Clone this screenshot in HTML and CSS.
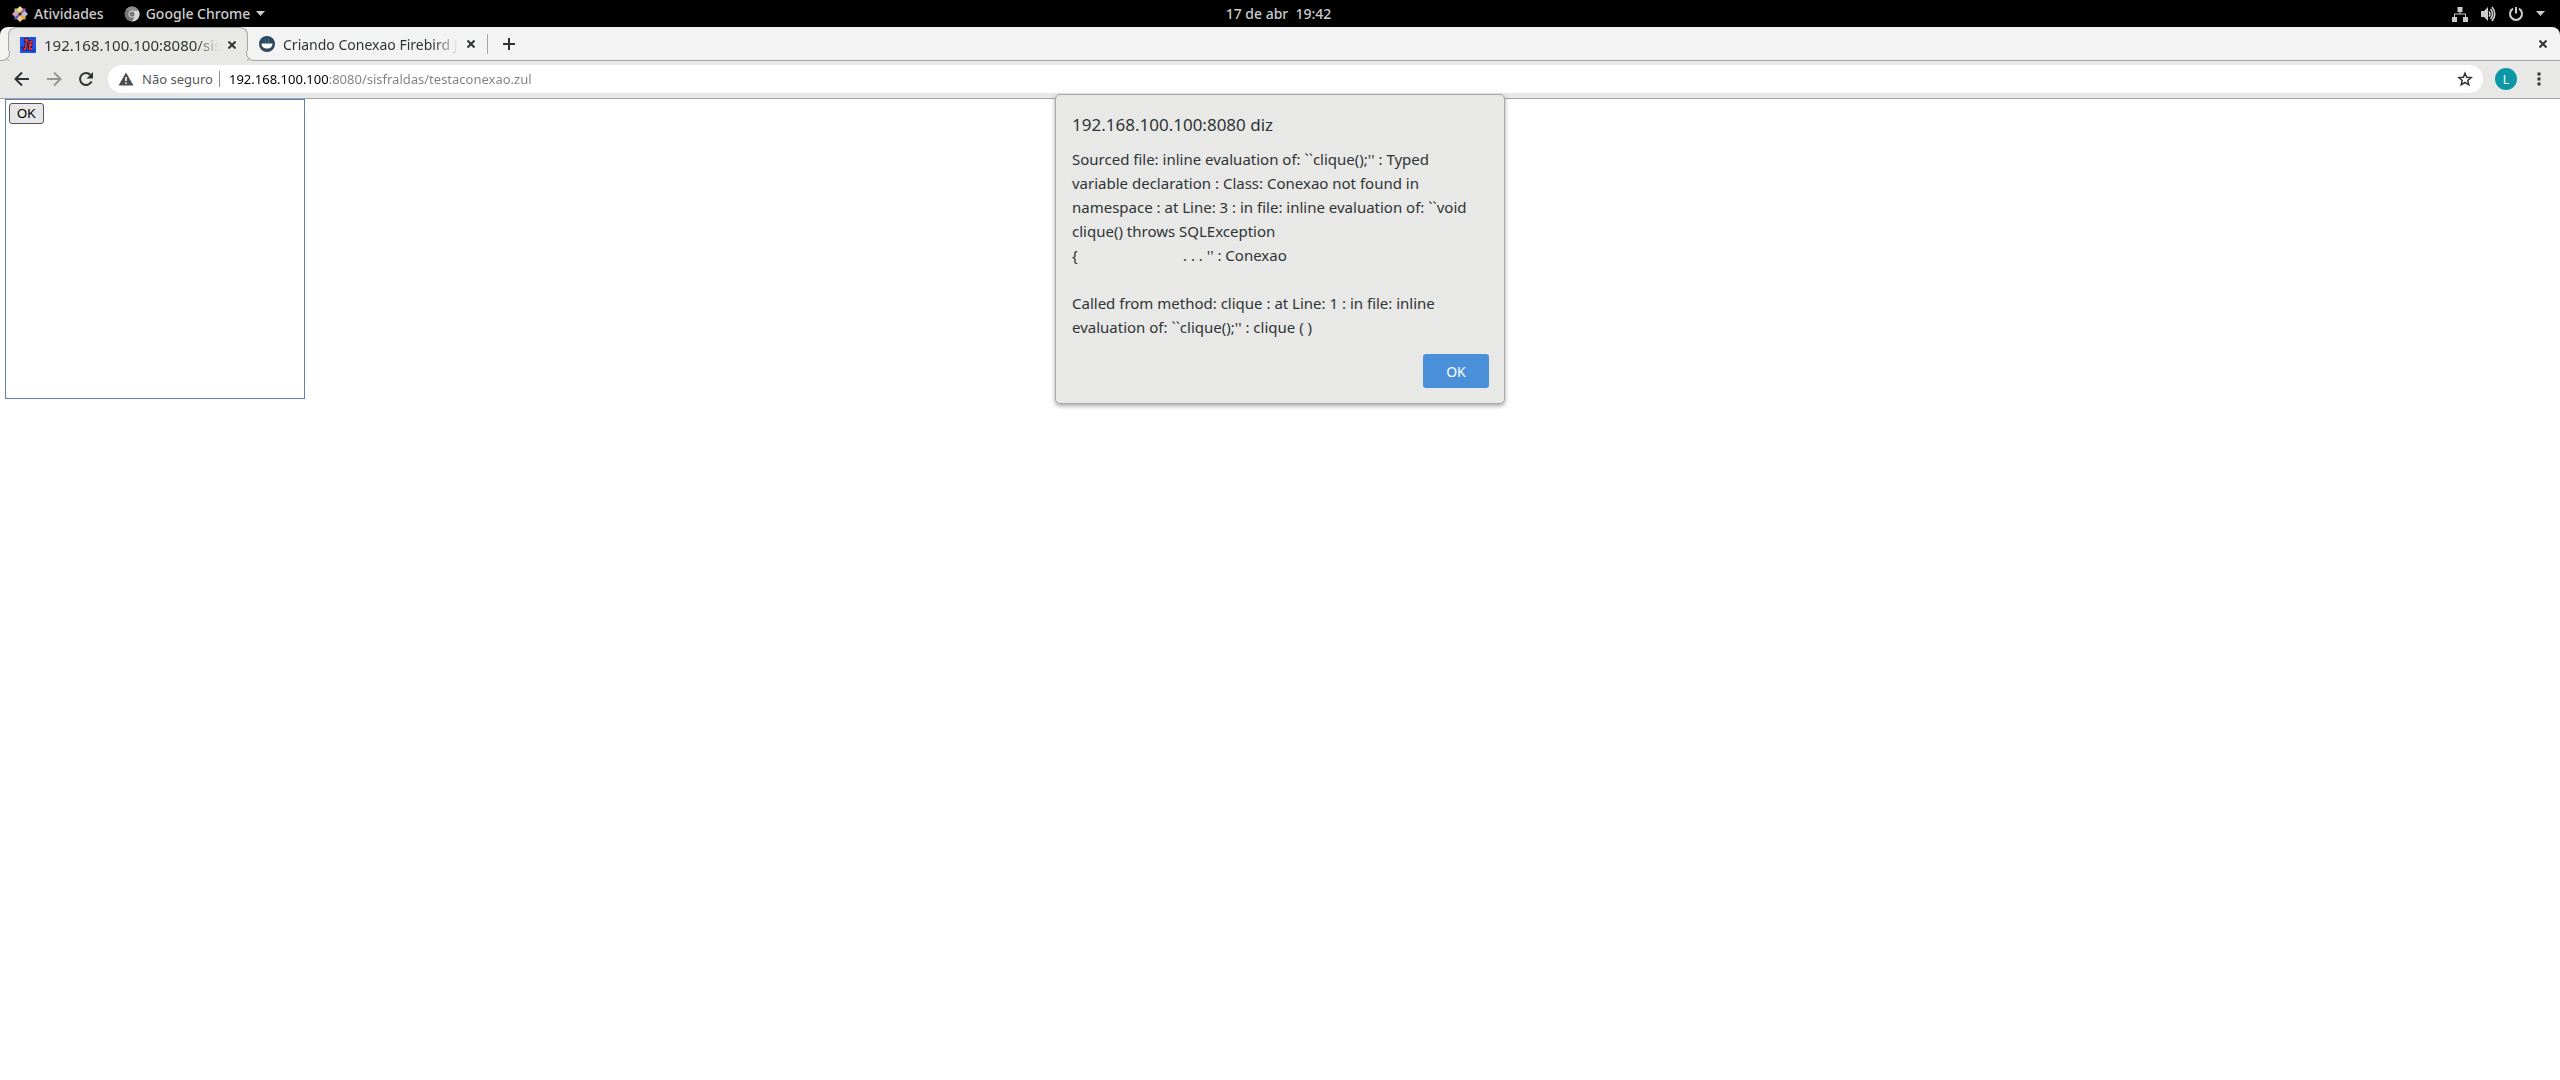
FILE: index.html
```
<!DOCTYPE html>
<html lang="pt-BR">

<head>
    <meta charset="utf-8">
    <meta name="viewport" content="width=device-width, initial-scale=1.0">
    <title>testaconexao</title>
    <link rel="stylesheet" href="styles.css">
</head>

<body>

    <header class="topbar">
        <div class="topbar_left">
            <button class="topbar_btn">
                <svg width="16" height="16" viewBox="0 0 16 16">
                    <path fill="#b5d07a" d="M2.500 2.500h5v5h-5z"/>
                    <path fill="#a85f9c" d="M8.500 2.500h5v5h-5z"/>
                    <path fill="#eda83c" d="M8.500 8.500h5v5h-5z"/>
                    <path fill="#5a5cb0" d="M2.500 8.500h5v5h-5z"/>
                    <path fill="#f0dc8c" d="M8 0l3 3-3 4-3-4z"/>
                    <path fill="#d99ac8" d="M0 8l3-3 4 3-4 3z"/>
                    <path fill="#b9b8e0" d="M16 8l-3 3-4-3 4-3z"/>
                    <path fill="#f3c98e" d="M8 16l-3-3 3-4 3 4z"/>
                </svg>
                Atividades
            </button>
            <button class="topbar_btn">
                <svg width="16" height="16" viewBox="0 0 16 16">
                    <circle cx="8" cy="8" r="7.5" fill="#777"/>
                    <path fill="#d8d8d8" d="M8 4.500h6.700A7.500 7.500 0 0 1 8 15.500l3.200-6z"/>
                    <path fill="#8c8c8c" d="M1.700 4A7.500 7.500 0 0 1 14.700 4.500H8z"/>
                    <circle cx="8" cy="8" r="3.5" fill="#ddd"/>
                    <circle cx="8" cy="8" r="2.6" fill="#777"/>
                </svg>
                Google Chrome
                <svg width="9" height="5" viewBox="0 0 9 5"><path fill="#ccc" d="M0 0h9L4.500 5z"/></svg>
            </button>
        </div>
        <button class="topbar_btn">17 de abr&nbsp; 19:42</button>
        <button class="topbar_btn topbar_right" aria-label="Sistema">
            <svg width="16" height="16" viewBox="0 0 16 16" fill="#ccc">
                <path d="M5.500 1h5v5H8.500v1.500H14V11h2v5h-5v-5h2V8.500H3V11h2v5H0v-5h2V7.500h5.500V6h-2z"/>
            </svg>
            <svg width="16" height="16" viewBox="0 0 16 16">
                <path fill="#ccc" d="M1 5h3l4-4v14l-4-4H1z"/>
                <path fill="none" stroke="#ccc" stroke-width="1.6" d="M9 5.500q2 2.500 0 5M10.500 3q4 5 0 10M12 1q5.500 7 0 14"/>
            </svg>
            <svg width="16" height="16" viewBox="0 0 16 16" fill="none" stroke="#ccc" stroke-width="2">
                <path d="M5 2.700a6 6 0 1 0 6 0M8 1v6.500"/>
            </svg>
            <svg width="9" height="5" viewBox="0 0 9 5"><path fill="#ccc" d="M0 0h9L4.500 5z"/></svg>
        </button>
    </header>

    <nav class="tabs">
        <div class="tab tab_active">
            <svg width="16" height="16" viewBox="0 0 16 16">
                <path fill="#1f54ee" d="M0 0h16v16H0z"/>
                <path fill="#173db4" d="M1 9h2v4H1zM13 12h2v3h-3zM11 1h3v1h-3z"/>
                <path fill="none" stroke="#0b0b14" stroke-width="3" d="M4 3h3L5.500 12H3M13 4.500h-2.500L9.500 12H12M10 8h2.500"/>
                <path fill="none" stroke="#f03030" stroke-width="1.8" d="M4.500 3H7L5.500 12H3.500M13 4.500h-2.500L9.500 12H12M10 8h2.500"/>
            </svg>
            <button class="tab_title">192.168.100.100:8080/sisfraldas</button>
            <button class="icon_btn" aria-label="Fechar guia">
                <svg width="8" height="8" viewBox="0 0 8 8"><path d="M.5.5l7 7M7.500.5l-7 7"/></svg>
            </button>
        </div>
        <div class="tab">
            <svg width="16" height="16" viewBox="0 0 16 16">
                <circle cx="8" cy="8" r="8" fill="#32465b"/>
                <path fill="#1b78a8" d="M6 2h1v5H6zM9 2h1v5H9z"/>
                <path fill="#fff" d="M2.500 7.500h11c0 3-2 5-5.500 5s-5.500-2-5.500-5z"/>
            </svg>
            <button class="tab_title">Criando Conexao Firebird Java</button>
            <button class="icon_btn" aria-label="Fechar guia">
                <svg width="8" height="8" viewBox="0 0 8 8"><path d="M.5.5l7 7M7.500.5l-7 7"/></svg>
            </button>
        </div>
        <button class="icon_btn new_tab" aria-label="Nova guia">
            <svg width="12" height="12" viewBox="0 0 12 12"><path d="M6 0v12M0 6h12"/></svg>
        </button>
        <button class="icon_btn close_window" aria-label="Fechar">
            <svg width="8" height="8" viewBox="0 0 8 8"><path d="M.5.5l7 7M7.500.5l-7 7"/></svg>
        </button>
    </nav>

    <div class="toolbar">
        <button class="icon_btn" aria-label="Voltar">
            <svg width="16" height="16" viewBox="0 0 16 16"><path d="M15 8H2M8 1.500L1.500 8 8 14.500"/></svg>
        </button>
        <button class="icon_btn" aria-label="Avançar" disabled>
            <svg width="16" height="16" viewBox="0 0 16 16"><path d="M1 8h13M8 1.500L14.500 8 8 14.500"/></svg>
        </button>
        <button class="icon_btn" aria-label="Recarregar">
            <svg width="16" height="16" viewBox="0 0 16 16"><path d="M13.500 10.500A6 6 0 1 1 12.500 4"/><path class="solid" d="M15 1v6.500H8.500z"/></svg>
        </button>
        <div class="omnibox">
            <svg width="16" height="16" viewBox="0 0 16 16"><path fill="#4b4f53" fill-rule="evenodd" d="M8 1.500L15.500 14.500H.5zM7.200 6v4h1.600V6zM7.200 11.200v1.600h1.600v-1.600z"/></svg>
            <label class="security" for="url">Não seguro</label>
            <input class="url" id="url" type="text" value="192.168.100.100:8080/sisfraldas/testaconexao.zul" spellcheck="false">
            <button class="icon_btn" aria-label="Favoritos">
                <svg class="star" width="16" height="16" viewBox="0 0 16 16"><path d="M8 2.200l1.700 4 4.400.4-3.300 2.900 1 4.300L8 11.500l-3.800 2.300 1-4.300L1.900 6.600l4.400-.4z"/></svg>
            </button>
        </div>
        <button class="avatar">L</button>
        <button class="icon_btn" aria-label="Menu">
            <svg width="4" height="14" viewBox="0 0 4 14"><path class="solid" d="M.5.5h3v3h-3zM.5 5.500h3v3h-3zM.5 10.500h3v3h-3z"/></svg>
        </button>
    </div>

    <main class="page">
        <div class="janela">
            <button class="janela_btn">OK</button>
        </div>
    </main>

    <section class="alerta" role="alertdialog" aria-labelledby="alerta_titulo">
        <h1 id="alerta_titulo">192.168.100.100:8080 diz</h1>
        <p>Sourced file: inline evaluation of: ``clique();'' : Typed variable declaration : Class: Conexao not found in namespace : at Line: 3 : in file: inline evaluation of: ``void clique() throws SQLException
{                           . . . '' : Conexao

Called from method: clique : at Line: 1 : in file: inline evaluation of: ``clique();'' : clique ( )</p>
        <button class="alerta_ok">OK</button>
    </section>

</body>
</html>
```
FILE: styles.css
```
* {
    box-sizing: border-box;
}

body {
    margin: 0;
    background-color: #fff;
    color: #2e3436;
    font-family: "Noto Sans", "Open Sans", sans-serif;
    font-size: 14px;
}

button {
    border: none;
    padding: 0;
    background: none;
    color: inherit;
    font: inherit;
}

svg {
    flex: none;
    display: block;
}

/* barra do gnome */

.topbar {
    display: grid;
    grid-template-columns: 1fr auto 1fr;
    align-items: center;
    height: 27px;
    padding: 0 15px 0 12px;
    background-color: #000;
    color: #ccc;
    font-weight: 500;
}

.topbar_left {
    display: flex;
    gap: 20px;
}

.topbar_btn {
    display: flex;
    align-items: center;
    gap: 6px;
    height: 26px;
}

.topbar_right {
    justify-self: end;
    gap: 12px;
}

/* abas */

.tabs {
    display: flex;
    align-items: center;
    height: 34px;
    padding: 0 13px 0 8px;
    border-radius: 8px 8px 0 0;
    background-color: #f3f3f3;
    box-shadow: inset 0 -1px #a4a4a2, 0 -8px #000;
}

.tab {
    position: relative;
    display: flex;
    align-items: center;
    width: 239px;
    height: 34px;
    padding: 0 12px 0 11px;
}

.tab_active {
    width: 240px;
    padding: 0 11px;
    border: 1px solid #a4a4a2;
    border-bottom: none;
    border-radius: 8px 8px 0 0;
    background-color: #e8e8e6;
    font-size: 15px;
    z-index: 1;
}

.tab_active::before,
.tab_active::after {
    content: "";
    position: absolute;
    bottom: 0;
    width: 9px;
    height: 9px;
    border-bottom: 1px solid #a4a4a2;
    background-color: #f3f3f3;
}

.tab_active::before {
    left: -9px;
    border-right: 1px solid #a4a4a2;
    border-bottom-right-radius: 8px;
    box-shadow: 1px 1px #e8e8e6;
}

.tab_active::after {
    right: -9px;
    border-left: 1px solid #a4a4a2;
    border-bottom-left-radius: 8px;
    box-shadow: -1px 1px #e8e8e6;
}

.tab_title {
    flex: 1;
    min-width: 0;
    margin: 0 9px 0 8px;
    overflow: hidden;
    white-space: nowrap;
    text-align: left;
    -webkit-mask-image: linear-gradient(to left, transparent, #000 24px);
    mask-image: linear-gradient(to left, transparent, #000 24px);
}

.icon_btn {
    display: flex;
    align-items: center;
    justify-content: center;
}

.icon_btn path {
    fill: none;
    stroke: #2e3436;
    stroke-width: 2;
}

.icon_btn .solid {
    fill: #2e3436;
    stroke: none;
}

.icon_btn:disabled {
    opacity: 0.45;
}

.new_tab {
    height: 20px;
    padding-left: 15px;
    border-left: 1px solid #a4a4a2;
}

.close_window {
    margin-left: auto;
}

/* barra de endereço */

.toolbar {
    display: flex;
    align-items: center;
    gap: 16px;
    height: 38px;
    padding: 0 19px 1px 14px;
    border-bottom: 1px solid #a4a4a2;
    background-color: #e8e8e6;
}

.omnibox {
    flex: 1;
    display: flex;
    align-items: center;
    height: 28px;
    margin: 0 -4px 0 -2px;
    padding: 0 10px;
    border-radius: 14px;
    background-color: #fff;
}

.security {
    margin-left: 8px;
    padding-right: 6px;
    border-right: 1px solid #8e8e8e;
    color: #555759;
    font-size: 13px;
    line-height: 16px;
}

.url {
    flex: 1;
    min-width: 0;
    padding: 0 0 0 9px;
    border: none;
    outline: none;
    /* o host fica preto, o resto da url em cinza */
    background: linear-gradient(to right, #000 109px, #808080 109px);
    -webkit-background-clip: text;
    background-clip: text;
    color: transparent;
    font: inherit;
    font-size: 13px;
}

.icon_btn .star path {
    stroke-width: 1.5;
}

.avatar {
    width: 22px;
    height: 22px;
    margin-right: 4px;
    border-radius: 50%;
    background-color: #0c97a7;
    color: #fff;
    font-size: 12px;
}

/* pagina */

.page {
    padding: 0 5px;
}

.janela {
    width: 300px;
    height: 300px;
    padding: 3px;
    border: 1px solid #5f82b4;
}

.janela_btn {
    width: 35px;
    height: 21px;
    border: 1px solid #555;
    border-radius: 3px;
    background-color: #e6e6e8;
    color: #000;
    font-family: "Liberation Sans", Arial, sans-serif;
    font-size: 13px;
}

/* alert do javascript */

.alerta {
    position: absolute;
    top: 94px;
    left: 50%;
    display: flex;
    flex-direction: column;
    width: 450px;
    margin-left: -225px;
    padding: 15px;
    border: 1px solid #a9a9a8;
    border-radius: 5px;
    background-color: #e8e8e6;
    box-shadow: 0 2px 4px rgba(0, 0, 0, 0.35);
}

.alerta h1 {
    margin: 0 0 7px;
    padding-left: 1px;
    font-size: 17px;
    font-weight: 400;
    line-height: 30px;
}

.alerta p {
    margin: 0 0 15px;
    padding: 0 12px 0 1px;
    font-size: 15px;
    line-height: 24px;
    white-space: pre-wrap;
}

.alerta_ok {
    align-self: flex-end;
    width: 66px;
    height: 34px;
    border-radius: 3px;
    background-color: #4a90d9;
    color: #fff;
}
```
